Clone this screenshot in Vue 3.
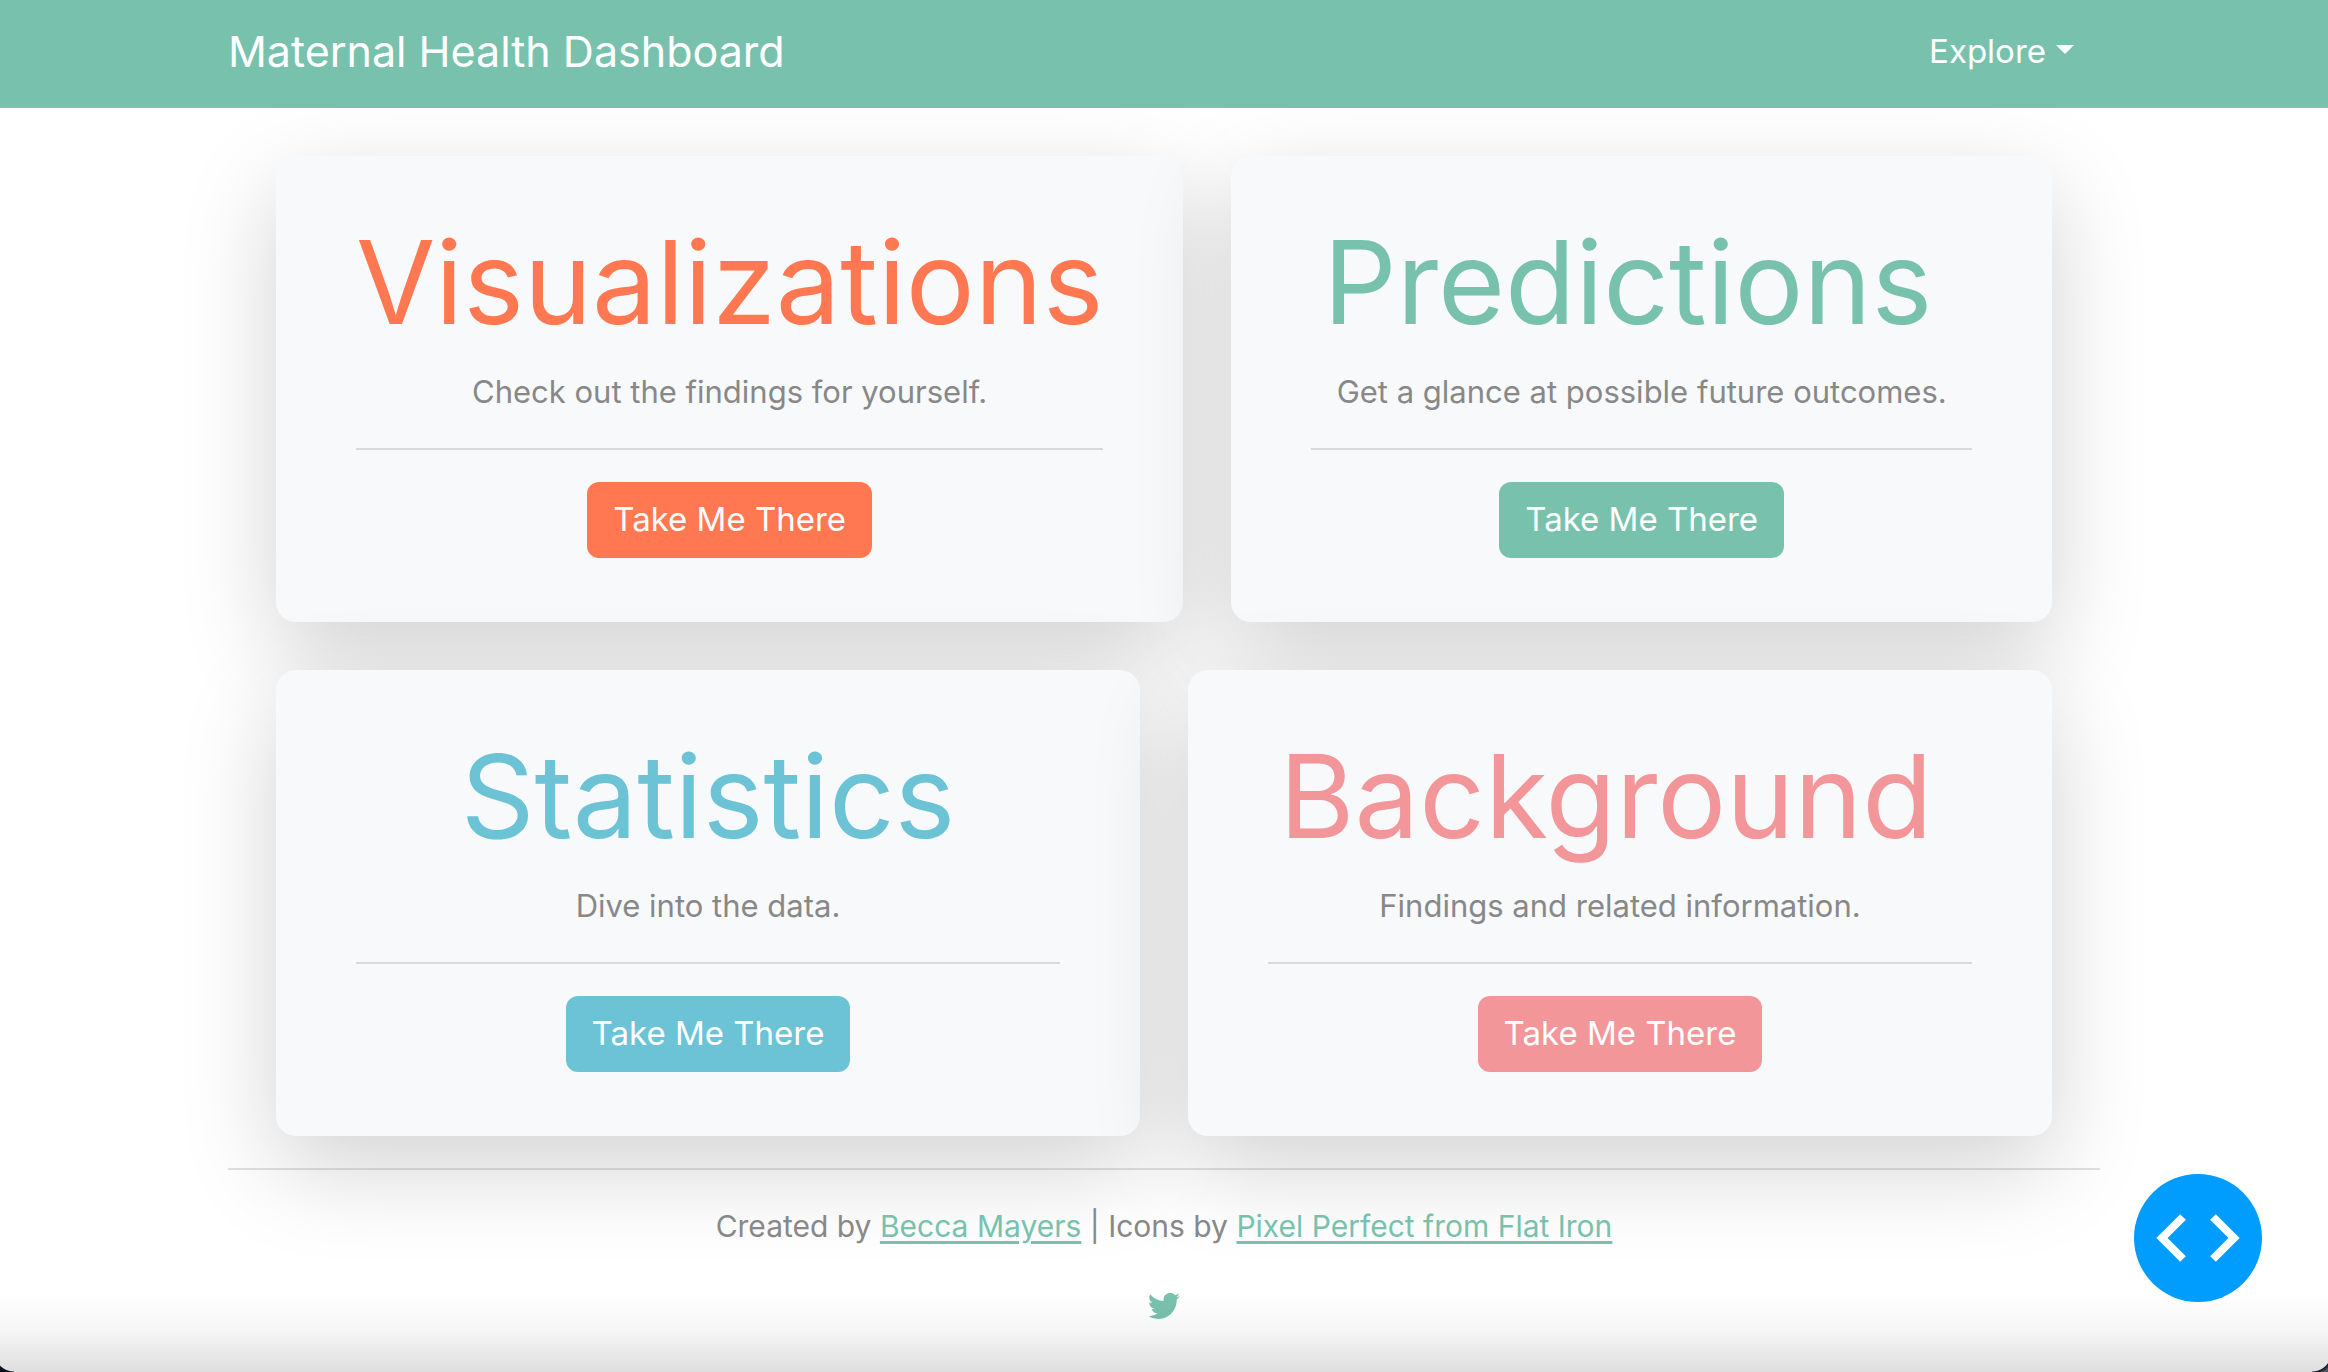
<script setup>
const rows = [
  [
    { title: 'Visualizations', text: 'Check out the findings for yourself.', tone: 'orange' },
    { title: 'Predictions', text: 'Get a glance at possible future outcomes.', tone: 'green', trail: true },
  ],
  [
    { title: 'Statistics', text: 'Dive into the data.', tone: 'blue' },
    { title: 'Background', text: 'Findings and related information.', tone: 'pink', trail: true },
  ],
]
</script>

<template>
  <div class="page">
    <header class="navbar">
      <nav class="container nav-inner">
        <a class="brand" href="#">Maternal Health Dashboard</a>
        <button class="explore" type="button" aria-haspopup="true">
          Explore<span class="caret"></span>
        </button>
      </nav>
    </header>

    <main class="container">
      <div class="cards">
        <div v-for="(row, i) in rows" :key="i" class="card-row">
          <section v-for="card in row" :key="card.title" class="card" :class="card.tone">
            <h1 :class="{ trail: card.trail }">{{ card.title }}</h1>
            <p>{{ card.text }}</p>
            <hr />
            <button class="go" type="button">Take Me There</button>
          </section>
        </div>
      </div>
    </main>

    <footer class="container footer">
      <hr />
      <p>
        Created by <a href="#">Becca Mayers</a> | Icons by
        <a href="#">Pixel Perfect from Flat Iron</a>
      </p>
      <a class="twitter" href="#" aria-label="Twitter">
        <svg viewBox="0 0 16 16" width="32" height="32" fill="currentColor">
          <path d="M5.026 15c6.038 0 9.341-5.003 9.341-9.334 0-.14 0-.282-.006-.422A6.685 6.685 0 0 0 16 3.542a6.658 6.658 0 0 1-1.889.518 3.301 3.301 0 0 0 1.447-1.817 6.533 6.533 0 0 1-2.087.793A3.286 3.286 0 0 0 7.875 6.03a9.325 9.325 0 0 1-6.767-3.429 3.289 3.289 0 0 0 1.018 4.382A3.323 3.323 0 0 1 .64 6.575v.045a3.288 3.288 0 0 0 2.632 3.218 3.203 3.203 0 0 1-.865.115 3.23 3.23 0 0 1-.614-.057 3.283 3.283 0 0 0 3.067 2.277A6.588 6.588 0 0 1 .78 13.58a6.32 6.32 0 0 1-.78-.045A9.344 9.344 0 0 0 5.026 15z" />
        </svg>
      </a>
    </footer>

    <div class="fade" aria-hidden="true"></div>
    <button class="code" type="button" aria-label="Developer tools">
      <svg viewBox="0 0 128 128" width="128" height="128" fill="none" stroke="#fff" stroke-width="8">
        <path d="M49 43 28 64l21 21M79 43l21 21-21 21" />
      </svg>
    </button>
  </div>
</template>

<style>
body {
  margin: 0;
  background: #fff;
}
</style>

<style scoped>
.page {
  position: relative;
  box-sizing: border-box;
  min-height: 100vh;
  overflow: hidden;
  font-family: Inter, "Liberation Sans", sans-serif;
  font-size: 31px;
  line-height: 48px;
  color: #888;
}
.container {
  box-sizing: border-box;
  width: 100%;
  max-width: 1920px;
  margin: 0 auto;
  padding: 0 24px;
}
button {
  border: 0;
  font: inherit;
  cursor: pointer;
}
hr {
  margin: 32px 0;
  border: 0;
  border-top: 2px solid currentColor;
  opacity: 0.25;
}
p {
  margin: 0;
}
.navbar {
  position: relative;
  z-index: 1;
  padding: 20px 0 26px;
  background: #78c2ad;
}
.nav-inner {
  display: flex;
  align-items: center;
  justify-content: space-between;
  min-height: 62px;
}
.brand {
  color: #fff;
  font-size: 43px;
  text-decoration: none;
}
.explore {
  display: flex;
  align-items: center;
  gap: 10px;
  padding: 0 26px 0 0;
  background: none;
  color: #fff;
  font-size: 33px;
}
.caret {
  margin-bottom: 4px;
  border: 9px solid transparent;
  border-top-color: #fff;
  border-bottom: 0;
}
.cards {
  display: flex;
  flex-direction: column;
  gap: 48px;
  padding: 48px 48px 0;
}
.card-row {
  display: flex;
  gap: 48px;
}
.card {
  flex: 1 1 0;
  box-sizing: border-box;
  padding: 64px 80px;
  border-radius: 20px;
  background: #f8f9fb;
  box-shadow: 0 32px 96px rgba(0, 0, 0, 0.175);
  text-align: center;
}
.card-row:last-child .card {
  min-width: 0;
}
h1 {
  margin: 0 0 22px;
  color: var(--tone);
  font-size: 115px;
  font-weight: 400;
  line-height: 126px;
  white-space: nowrap;
}
.trail {
  padding-right: 28px;
}
.go {
  padding: 13px 26px 15px;
  border-radius: 12px;
  background: var(--tone);
  color: #fff;
  font-size: 33px;
  vertical-align: top;
}
.orange { --tone: #ff7851; }
.green { --tone: #78c2ad; }
.blue { --tone: #6cc3d5; }
.pink { --tone: #f3969a; }
.footer {
  position: relative;
  font-size: 30px;
  text-align: center;
}
.footer a {
  color: #78c2ad;
  text-underline-offset: 4px;
}
.twitter {
  display: inline-block;
  margin-top: 39px;
  line-height: 0;
}
.fade {
  position: absolute;
  inset: auto 0 0;
  height: 80px;
  background:
    radial-gradient(circle at 100% 0, transparent 19px, #0a101c 20px) 0 100% / 14px 20px no-repeat,
    radial-gradient(circle at 0 0, transparent 19px, #10141c 20px, #4f5866 23px) 100% 100% / 16px 20px no-repeat,
    linear-gradient(rgba(0, 0, 0, 0), rgba(0, 0, 0, 0.04) 50%, rgba(0, 0, 0, 0.13));
  pointer-events: none;
}
.code {
  position: absolute;
  right: 66px;
  bottom: 70px;
  width: 128px;
  height: 128px;
  padding: 0;
  border-radius: 50%;
  background: #009dff;
}
.code svg {
  display: block;
}
</style>
